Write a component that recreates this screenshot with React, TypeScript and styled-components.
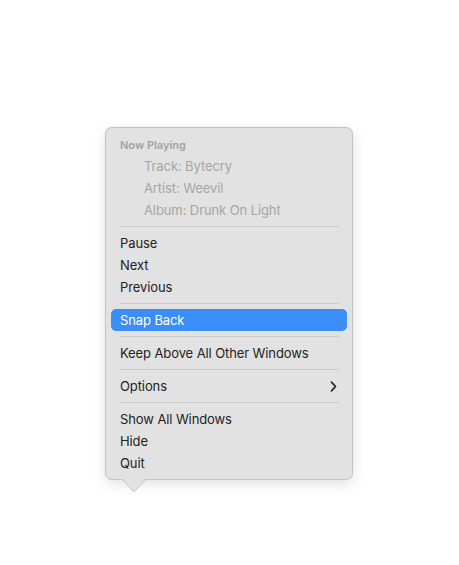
import React from "react";
import styled, { createGlobalStyle } from "styled-components";

const Global = createGlobalStyle`
  html, body { margin: 0; padding: 0; background: #ffffff; }
  body { font-family: Inter, "Noto Sans", "Liberation Sans", sans-serif; -webkit-font-smoothing: antialiased; }
`;

const Page = styled.div`
  width: 459px;
  height: 565px;
  padding: 127px 0 0 105px;
  box-sizing: border-box;
`;

const Menu = styled.div`
  position: relative;
  width: 248px;
  box-sizing: border-box;
  padding: 6px 5px 5px 5px;
  background: #e2e2e2;
  border: 1px solid #c4c4c4;
  border-radius: 7px;
  box-shadow: 0 4px 14px rgba(0, 0, 0, 0.12), 0 0 2px rgba(0, 0, 0, 0.06);
  display: flex;
  flex-direction: column;
`;

const Header = styled.div`
  height: 21px;
  display: flex;
  align-items: center;
  padding-left: 9px;
  font-size: 11px;
  font-weight: 600;
  color: #a3a3a3;
`;

const Item = styled.div<{ $indent?: boolean; $disabled?: boolean; $active?: boolean }>`
  height: 22px;
  display: flex;
  align-items: center;
  justify-content: space-between;
  padding: 0 10px 0 ${(p) => (p.$indent ? 33 : 9)}px;
  border-radius: 5px;
  font-size: 13px;
  letter-spacing: -0.1px;
  color: ${(p) => (p.$active ? "#ffffff" : p.$disabled ? "#a5a5a5" : "#232323")};
  background: ${(p) => (p.$active ? "#3b8ef7" : "transparent")};
`;

const Separator = styled.div`
  height: 11px;
  display: flex;
  align-items: center;
  padding: 0 8px 0 9px;
  &::after {
    content: "";
    flex: 1;
    height: 1px;
    background: #cacaca;
  }
`;

const Arrow = styled.svg`
  position: absolute;
  left: 16px;
  bottom: -14px;
  width: 24px;
  height: 15px;
`;

export default function App() {
  return (
    <Page>
      <Global />
      <Menu>
        <Header>Now Playing</Header>
        <Item $indent $disabled>Track: Bytecry</Item>
        <Item $indent $disabled>Artist: Weevil</Item>
        <Item $indent $disabled>Album: Drunk On Light</Item>
        <Separator />
        <Item>Pause</Item>
        <Item>Next</Item>
        <Item>Previous</Item>
        <Separator />
        <Item $active>Snap Back</Item>
        <Separator />
        <Item>Keep Above All Other Windows</Item>
        <Separator />
        <Item>
          Options
          <svg width="7" height="11" viewBox="0 0 7 11">
            <path d="M1.5 1.2 L5.5 5.5 L1.5 9.8" fill="none" stroke="#262626" strokeWidth="1.7" strokeLinecap="round" strokeLinejoin="round" />
          </svg>
        </Item>
        <Separator />
        <Item>Show All Windows</Item>
        <Item>Hide</Item>
        <Item>Quit</Item>
        <Arrow viewBox="0 0 24 15">
          <path d="M0 1 L12 14 L24 1" fill="#e2e2e2" stroke="#c4c4c4" strokeWidth="1" />
          <rect x="1" y="0" width="22" height="1.2" fill="#e2e2e2" />
        </Arrow>
      </Menu>
    </Page>
  );
}
